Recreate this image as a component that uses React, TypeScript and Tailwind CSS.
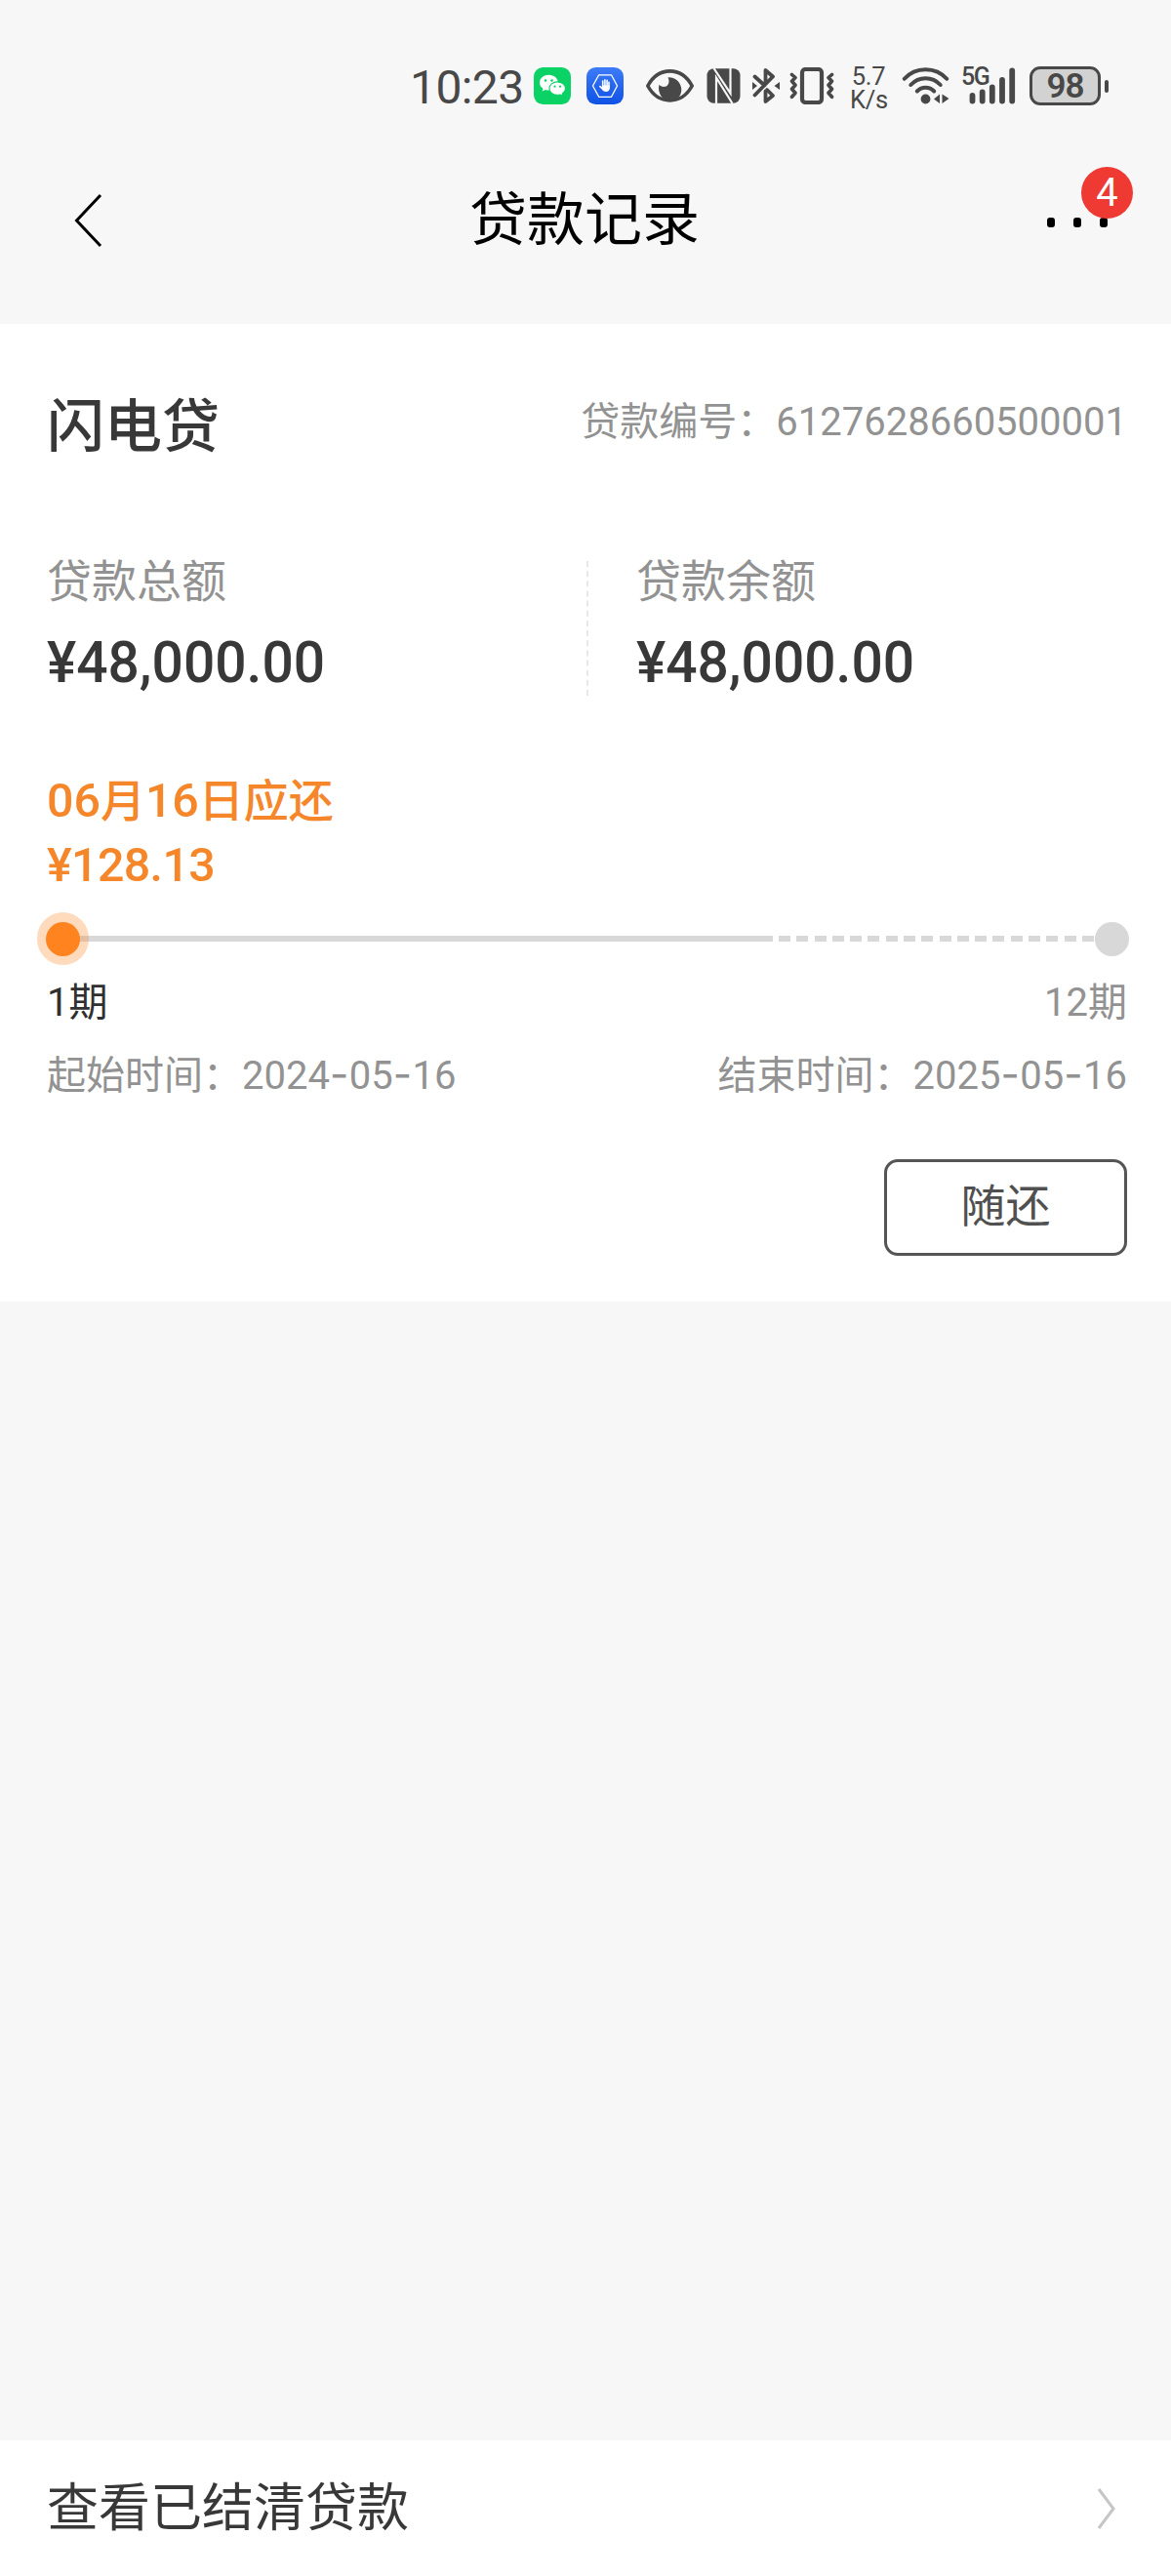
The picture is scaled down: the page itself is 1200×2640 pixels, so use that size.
import { Fragment, ReactNode } from "react";

interface AmountProps {
  label: string;
  value: string;
}

interface PeriodProps {
  label: string;
  date: string;
}

const DASHES = Array.from({ length: 18 }, (_, i) => i);

function WeChatIcon() {
  return (
    <svg className="w-[38px] h-[38px] mt-px" viewBox="0 0 38 38">
      <rect width="38" height="38" rx="9.5" fill="#0ad265" />
      <path d="M15.5 7.8c-5.3 0-9.5 3.5-9.5 7.9 0 2.5 1.3 4.6 3.4 6l-.7 2.9 3.3-1.7c1.1.4 2.3.6 3.5.6 5.2 0 9.3-3.5 9.3-7.8s-4.1-7.9-9.3-7.9z" fill="#fff" />
      <path d="M24.2 14.9c-4.6 0-8.3 3-8.3 6.7s3.7 6.7 8.3 6.7c1 0 2-.1 2.9-.4l2.8 1.5-.6-2.5c2-1.2 3.2-3.1 3.2-5.3 0-3.7-3.7-6.7-8.3-6.7z" fill="#fff" stroke="#0ad265" strokeWidth="1.1" />
      <g fill="#0ad265">
        <circle cx="12" cy="13.5" r="1.3" />
        <circle cx="18.5" cy="13.5" r="1.3" />
        <circle cx="21.5" cy="19.7" r="1.1" />
        <circle cx="27" cy="19.7" r="1.1" />
      </g>
    </svg>
  );
}

function HandIcon() {
  return (
    <svg className="w-[38px] h-[38px] mt-px ml-4" viewBox="0 0 38 38">
      <defs>
        <linearGradient id="handBg" x1="0" y1="0" x2="0" y2="1">
          <stop offset="0" stopColor="#3d7bf7" />
          <stop offset="1" stopColor="#0f52e4" />
        </linearGradient>
      </defs>
      <rect width="38" height="38" rx="9.5" fill="url(#handBg)" />
      <path d="M6.5 19l6.2-11.2h12.8L31.5 19l-6 11.3H12.7z" fill="none" stroke="#fff" strokeWidth="1.3" strokeLinejoin="round" />
      <path d="M16.7 14v7M18.9 12.8v7M21.1 13.4v7M23 15.3v6M13.8 19.5l3 3" fill="none" stroke="#fff" strokeWidth="1.6" strokeLinecap="round" />
      <path d="M15.9 18.5h7.9v2.6c0 2.4-1.5 4-3.8 4-2 0-3.3-1-4.1-2.8z" fill="#fff" />
    </svg>
  );
}

function EyeIcon() {
  return (
    <svg className="w-[50px] h-[38px] mt-px ml-[22px]" viewBox="0 0 50 38">
      <path d="M2.8 19C8 9.5 16 3.9 25.5 3.9S43 9.5 48.2 19C43 28.500 35 33.900 25.500 33.900S8 28.500 2.800 19z" fill="none" stroke="#484848" strokeWidth="3.6" strokeLinejoin="round" />
      <path d="M23.500 10.200c2.200 4.400.6 8.800-3 9.600-2.400.5-4.400-.2-6.100-2-2 8.600 3.600 16.800 11.600 16.800 6.500 0 11.300-5.200 11.300-11.600 0-7.200-5.800-13.200-13.800-12.800z" fill="#484848" />
    </svg>
  );
}

function NfcIcon() {
  return (
    <svg className="w-[35px] h-[38px] mt-px ml-[13px]" viewBox="0 0 35 38">
      <rect x=".5" y="1.3" width="34" height="35.4" rx="7" fill="#484848" />
      <path d="M10 37V10.5L26.5 37M7.5 1L24.5 26.5V1" fill="none" stroke="#f7f7f7" strokeWidth="2.2" />
    </svg>
  );
}

function BluetoothIcon() {
  return (
    <svg className="w-[28px] h-[38px] mt-px ml-3" viewBox="0 0 28 38">
      <g fill="none" stroke="#484848" strokeWidth="3.8" strokeLinejoin="round" strokeLinecap="round">
        <path d="M2.5 9.5L12.5 18.5M13.5 17V3L21 9.5 2.5 28.5" />
        <path d="M13.5 24.5v10.5L21 29l-6-6" />
      </g>
      <path d="M0 15l5 4-5 4zM28 15l-5.5 4 5.5 4z" fill="#484848" />
    </svg>
  );
}

function VibrateIcon() {
  return (
    <svg className="w-[46px] h-[38px] mt-px ml-[10px]" viewBox="0 0 46 38">
      <rect x="13" y="2" width="20" height="34" rx="3.5" fill="none" stroke="#484848" strokeWidth="4.2" />
      <path d="M2.5 7.5l3.5 3-3.5 3.8 3.5 4-3.5 4 3.5 4-3.5 4M43.5 7.5l-3.5 3 3.5 3.8-3.5 4 3.5 4-3.5 4 3.5 4" fill="none" stroke="#484848" strokeWidth="3.6" strokeLinejoin="round" strokeLinecap="round" />
    </svg>
  );
}

function WifiIcon() {
  return (
    <svg className="w-[50px] h-[38px] mt-px ml-[15px]" viewBox="0 0 50 38">
      <g fill="none" stroke="#484848" strokeWidth="4" strokeLinecap="round">
        <path d="M2.8 11.8C8.5 5.3 16 2.2 24.5 2.2s16 3.1 21.7 9.6" />
        <path d="M9.3 18C13.5 13.5 18.7 11.3 24.5 11.3S35.5 13.5 39.7 18" />
        <path d="M15.8 24.5c2.4-2.5 5.3-3.8 8.7-3.8s6.3 1.3 8.7 3.8" />
      </g>
      <circle cx="24.5" cy="32.5" r="4.9" fill="#484848" />
      <path d="M39 27.5v9.5l-6-4.5zM41.5 27.5v9.5l7-5z" fill="#484848" />
    </svg>
  );
}

function SignalIcon() {
  return (
    <div className="relative w-[56px] h-[38px] mt-px ml-[11px]">
      <span className="absolute left-0 -top-[2px] text-[25px] leading-[24px] font-medium tracking-[-1.5px]">5G</span>
      <svg className="w-[56px] h-[38px]" viewBox="0 0 56 38">
        <g stroke="#484848" strokeWidth="5.8" strokeLinecap="round">
          <path d="M11.5 29v5.5M21.7 25.5v9M31.8 20.5v14M42 13v21.5M52.2 3.5v31" />
        </g>
      </svg>
    </div>
  );
}

function Battery({ level }: { level: number }) {
  return (
    <div className="flex items-center ml-[14px] h-[40px]">
      <div className="flex items-center justify-center w-[73px] h-[40px] rounded-[11px] border-[3px] border-[#484848] bg-[#d2d2d2] text-[35px] leading-none font-semibold tracking-[-1px]">
        {level}
      </div>
      <div className="w-[4px] h-[13px] ml-[4px] rounded-full bg-[#484848]" />
    </div>
  );
}

function StatusBar() {
  return (
    <div className="flex h-[108px] pt-[68px] pl-[420px] text-[#484848]">
      <div className="w-[127px] text-[48px] leading-[44px] tracking-[-0.6px]">10:23</div>
      <WeChatIcon />
      <HandIcon />
      <EyeIcon />
      <NfcIcon />
      <BluetoothIcon />
      <VibrateIcon />
      <div className="w-[38px] -mt-[2px] ml-4 text-center text-[25.5px] leading-[24px] tracking-[-0.3px] whitespace-nowrap">
        <div>5.7</div>
        <div>K/s</div>
      </div>
      <WifiIcon />
      <SignalIcon />
      <Battery level={98} />
    </div>
  );
}

function NavBar() {
  return (
    <header className="flex items-center justify-between h-[224px] pl-[75px] pr-[65px] pt-3">
      <svg className="w-[32px] h-[56px] mr-[18px]" viewBox="0 0 32 56">
        <path d="M28 2L3.5 28 28 54" fill="none" stroke="#000" strokeWidth="3" />
      </svg>
      <h1 className="text-[59px] leading-[70px] text-black">贷款记录</h1>
      <div className="relative flex gap-[19px] pt-1">
        <span className="w-2 h-[10px] rounded-[3px] bg-black" />
        <span className="w-2 h-[10px] rounded-[3px] bg-black" />
        <span className="w-2 h-[10px] rounded-[3px] bg-black" />
        <span className="absolute left-[35px] top-[-48px] flex items-center justify-center w-[53px] h-[53px] rounded-full bg-[#ef3a34] text-[40px] leading-none text-white">
          4
        </span>
      </div>
    </header>
  );
}

function Amount({ label, value }: AmountProps) {
  return (
    <div>
      <div className="text-[46px] leading-[60px] text-[#929292]">{label}</div>
      <div className="mt-[17px] text-[60px] leading-[72px] font-medium text-[#383838] origin-left scale-x-[0.948] whitespace-nowrap">{value}</div>
    </div>
  );
}

// The hyphens in dates are wider than Roboto's own
function Period({ label, date }: PeriodProps) {
  return (
    <span className="text-[40px]">
      {label}：
      {date.split("-").map((part, i) => (
        <Fragment key={i}>
          {i > 0 && <span className="font-[Inter,sans-serif] text-[42px] leading-none tracking-[0.5px]">-</span>}
          {part}
        </Fragment>
      ))}
    </span>
  );
}

// Latin digits in bold rows sit slightly larger than the Chinese text beside them
function Num({ children }: { children: ReactNode }) {
  return <span className="text-[1.05em]">{children}</span>;
}

function Timeline() {
  return (
    <div className="flex items-center h-[54px] -ml-[11px] -mr-[2px]">
      <div className="z-10 flex items-center justify-center w-[53px] h-[54px] rounded-full bg-[#ff841f]/30">
        <div className="w-[35px] h-[35px] rounded-full bg-[#ff841f]" />
      </div>
      <div className="w-[711px] h-[6px] -ml-[10px] bg-[#d8d8d8]" />
      <div className="flex flex-1 justify-between pl-[6px] pr-px">
        {DASHES.map((i) => (
          <div key={i} className="w-[12px] h-[6px] bg-[#d8d8d8]" />
        ))}
      </div>
      <div className="w-[35px] h-[35px] rounded-full bg-[#d8d8d8]" />
    </div>
  );
}

export default function App() {
  return (
    <div className="flex flex-col w-[1200px] h-[2640px] bg-[#f7f7f7] font-[Roboto,'Noto_Sans_CJK_SC',sans-serif]" lang="zh-CN">
      <StatusBar />
      <NavBar />

      <section className="h-[1002px] bg-white pl-[48px] pr-[45px] pt-[68px]">
        <div className="flex justify-between h-[76px]">
          <h2 className="text-[59px] leading-[76px] font-medium text-[#383838]">闪电贷</h2>
          <p className="text-[40px] leading-[66px] text-[#929292]">贷款编号：6127628660500001</p>
        </div>

        <div className="flex mt-[90px]">
          <div className="w-[553px]">
            <Amount label="贷款总额" value="¥48,000.00" />
          </div>
          <div className="w-0 h-[138px] mt-[9px] mr-[49px] border-l-2 border-dashed border-[#e8e8e8]" />
          <Amount label="贷款余额" value="¥48,000.00" />
        </div>

        {/* Next repayment */}
        <div className="mt-[73px] text-[46px] leading-[66px] font-medium text-[#f5862a]">
          <p><Num>06</Num>月<Num>16</Num>日应还</p>
          <p className="tracking-[-0.6px]"><Num>¥128.13</Num></p>
        </div>

        <div className="pt-[15px] pl-px">
          <Timeline />
        </div>

        <div className="flex justify-between mt-[7px] text-[40px] leading-[64px] text-[#929292]">
          <span className="text-[#303030]">1期</span>
          <span>12期</span>
        </div>
        <div className="flex justify-between mt-[11px] leading-[64px] text-[#929292]">
          <Period label="起始时间" date="2024-05-16" />
          <Period label="结束时间" date="2025-05-16" />
        </div>

        <div className="flex justify-end mt-[53px]">
          <button className="w-[249px] h-[99px] pb-1 rounded-[14px] border-[3px] border-[#555] text-[46px] leading-none text-[#505050]">
            随还
          </button>
        </div>
      </section>

      <footer className="flex items-center justify-between mt-auto h-[139px] pl-[48px] pr-[56px] bg-white">
        <span className="text-[53px] leading-[70px] text-[#383838]">查看已结清贷款</span>
        <svg className="w-[20px] h-[44px]" viewBox="0 0 20 44">
          <path d="M2 2l15 20L2 42" fill="none" stroke="#c6c6c6" strokeWidth="3" />
        </svg>
      </footer>
    </div>
  );
}
